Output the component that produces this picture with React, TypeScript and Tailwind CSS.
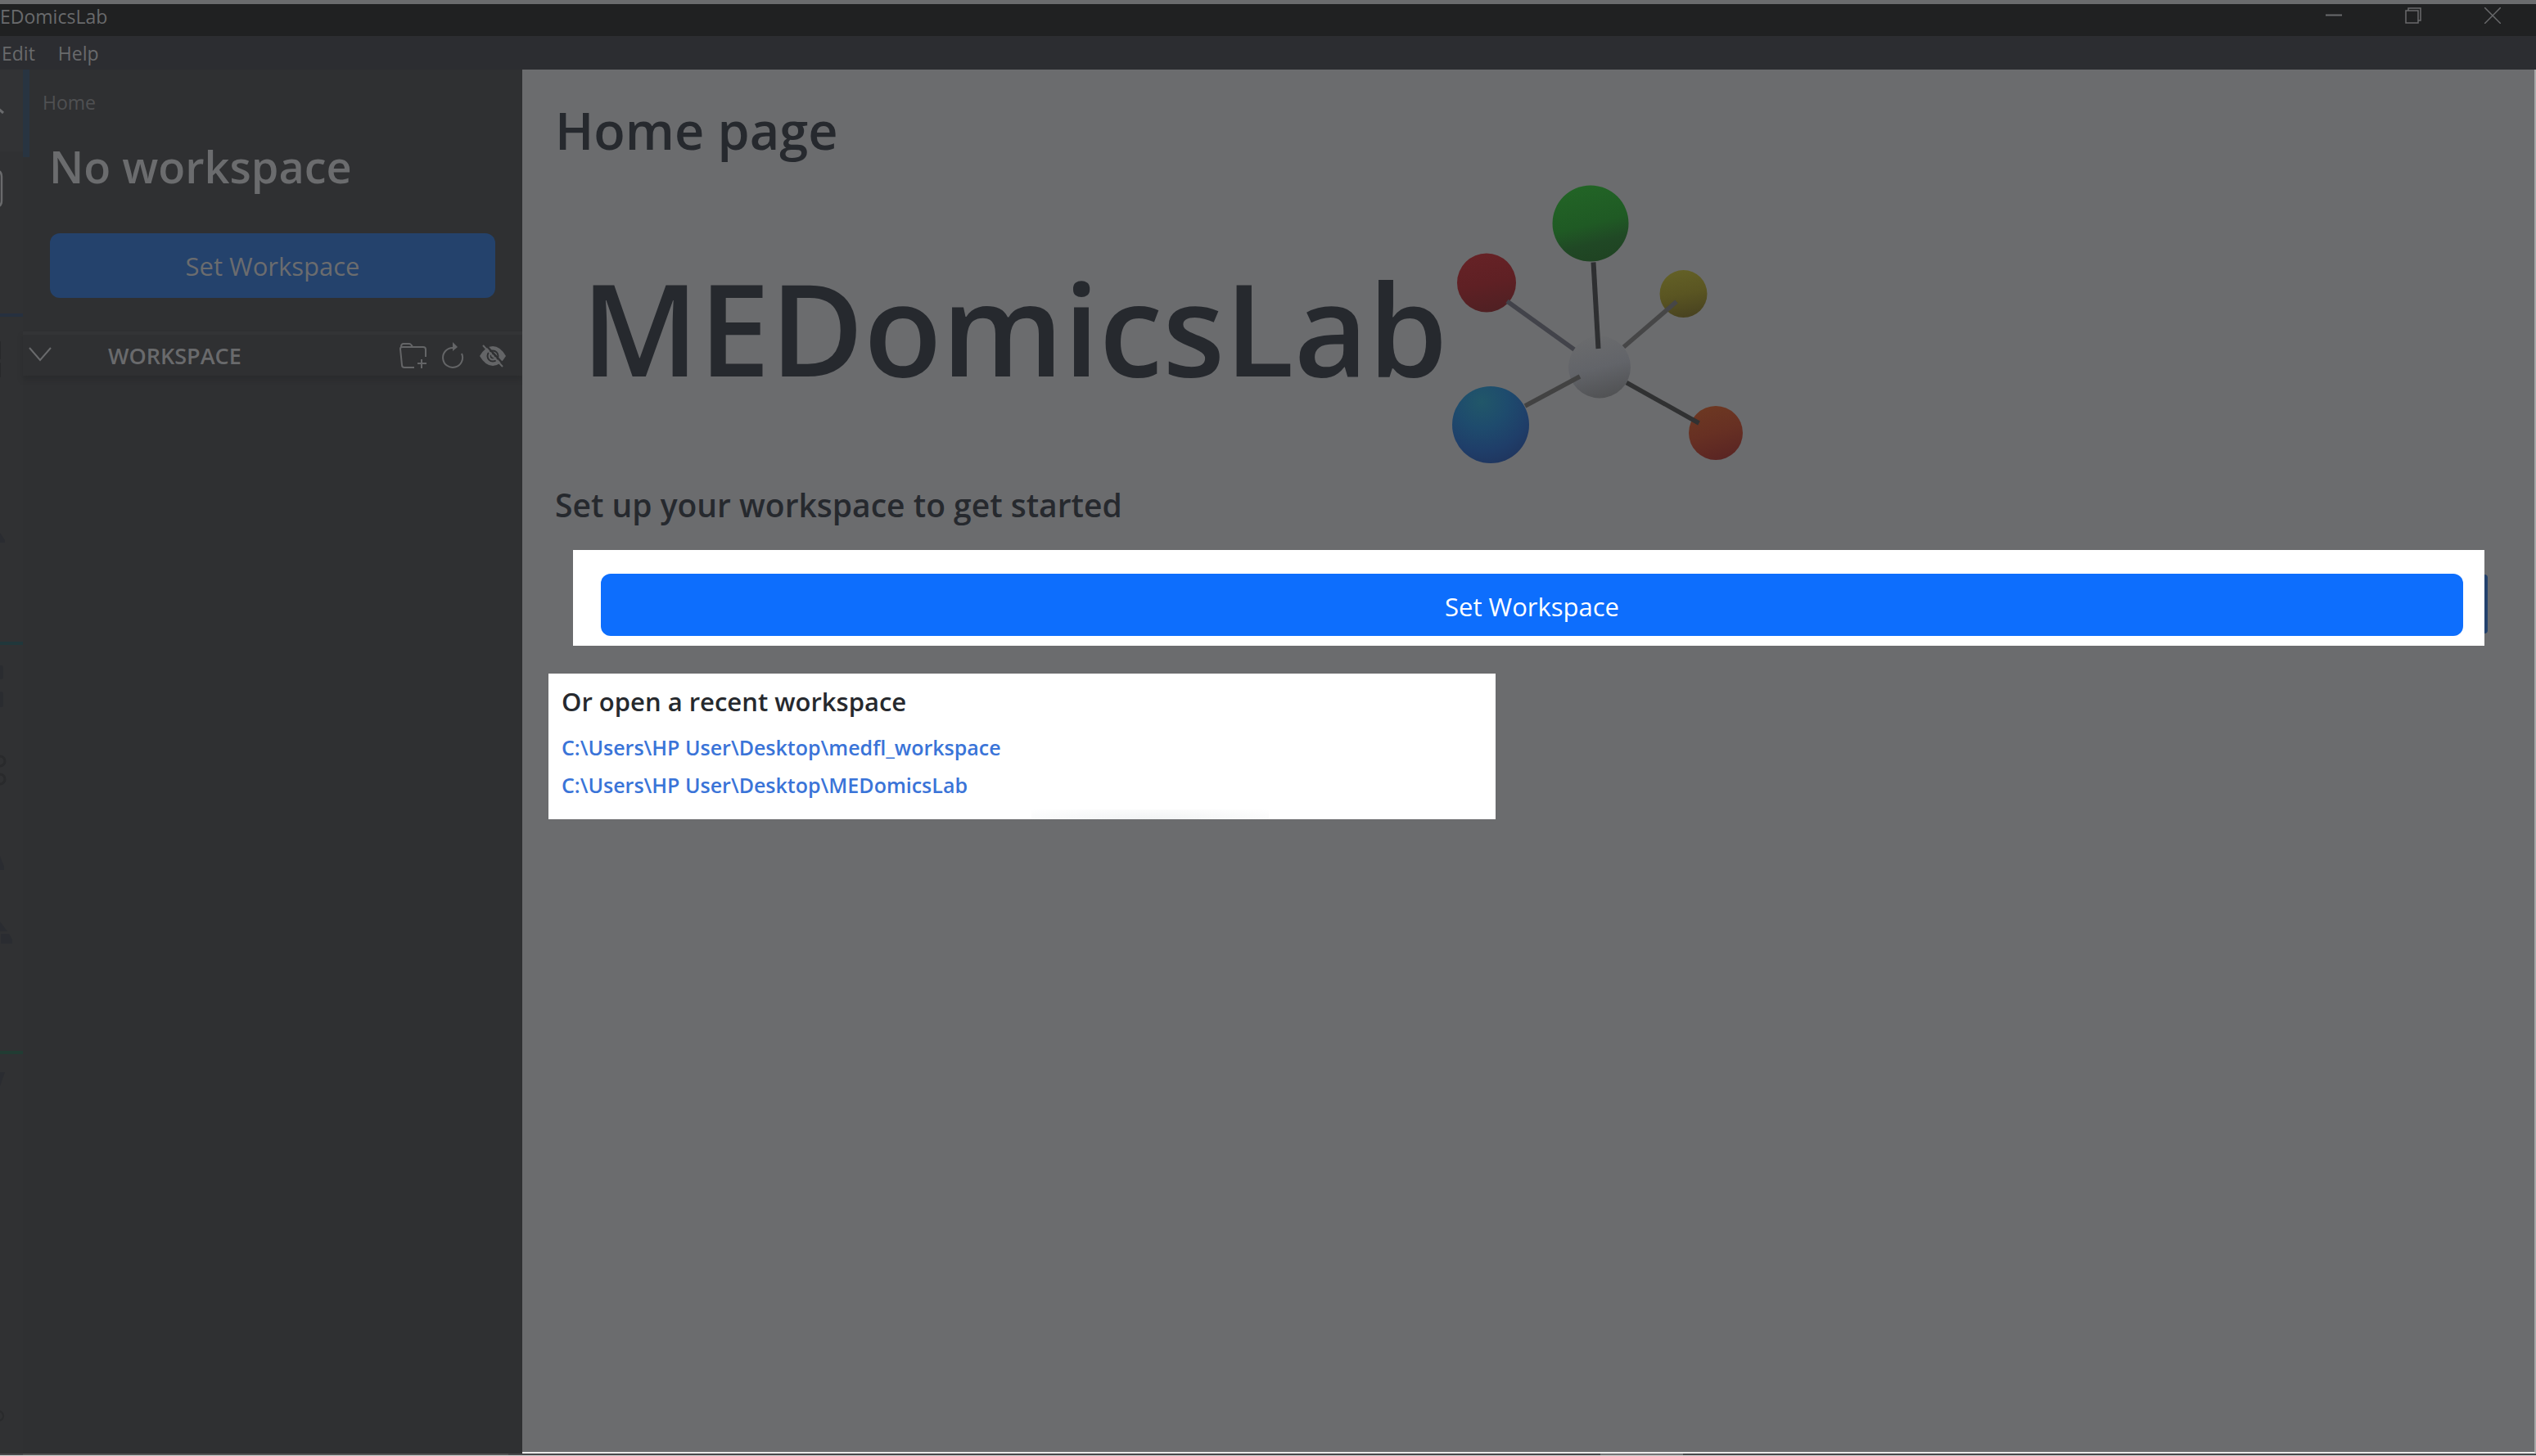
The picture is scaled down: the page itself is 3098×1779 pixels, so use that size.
import React from "react";

const recent = [
  "C:\\Users\\HP User\\Desktop\\medfl_workspace",
  "C:\\Users\\HP User\\Desktop\\MEDomicsLab",
];

function Molecule() {
  return (
    <svg viewBox="0 0 420 390" className="h-[390px] w-[420px] shrink-0" role="img" aria-label="Molecule logo">
      <defs>
        <linearGradient id="green" x1="0.4" y1="0" x2="0.65" y2="1">
          <stop offset="0" stopColor="#226426" />
          <stop offset="0.5" stopColor="#1f5a24" />
          <stop offset="0.75" stopColor="#204825" />
          <stop offset="1" stopColor="#1f4322" />
        </linearGradient>
        <linearGradient id="red" x1="0.4" y1="0" x2="0.6" y2="1">
          <stop offset="0" stopColor="#662226" />
          <stop offset="0.5" stopColor="#5f2024" />
          <stop offset="1" stopColor="#4f2023" />
        </linearGradient>
        <linearGradient id="yellow" x1="0.4" y1="0" x2="0.6" y2="1">
          <stop offset="0" stopColor="#636026" />
          <stop offset="0.5" stopColor="#5a5522" />
          <stop offset="1" stopColor="#484220" />
        </linearGradient>
        <radialGradient id="blue" cx="0.38" cy="0.2" r="0.85">
          <stop offset="0" stopColor="#215769" />
          <stop offset="0.4" stopColor="#1e4b6d" />
          <stop offset="0.75" stopColor="#1f3e69" />
          <stop offset="1" stopColor="#1f355e" />
        </radialGradient>
        <linearGradient id="orange" x1="0.3" y1="0" x2="0.6" y2="1">
          <stop offset="0" stopColor="#6d3822" />
          <stop offset="0.5" stopColor="#673023" />
          <stop offset="1" stopColor="#5a2523" />
        </linearGradient>
        <linearGradient id="core" x1="0.4" y1="0" x2="0.65" y2="1">
          <stop offset="0" stopColor="#6a6b6d" />
          <stop offset="0.5" stopColor="#626469" />
          <stop offset="1" stopColor="#505153" />
        </linearGradient>
      </defs>
      <circle cx="203" cy="72" r="46.500" fill="url(#green)" />
      <circle cx="76" cy="144.500" r="36" fill="url(#red)" />
      <circle cx="316.500" cy="158" r="29" fill="url(#yellow)" />
      <circle cx="81" cy="318" r="47" fill="url(#blue)" />
      <circle cx="356" cy="328" r="33" fill="url(#orange)" />
      <circle cx="214" cy="247.500" r="38" fill="url(#core)" />
      <g strokeWidth="5.500" fill="none">
        <path d="M206.500 119.500 212.500 225" stroke="#2e2f31" strokeWidth="6" />
        <path d="M101 167 183 226" stroke="#42434a" />
        <path d="M308 167.500 243.500 223" stroke="#464647" />
        <path d="M123 295 190 259" stroke="#424242" />
        <path d="M247 266.500 335.500 316" stroke="#303132" />
      </g>
    </svg>
  );
}

function FolderPlus() {
  return (
    <svg viewBox="0 0 34 36" className="h-9 w-[34px]" fill="none" stroke="#646567" strokeWidth="2">
      <path d="M19 32H7q-3 0-3-3L2 9q0-2 3-2h25q3 0 3 3v9" />
      <path d="M3 7Q3 3 6 3h7q2 0 4 4M28 22v11M23 27h11" />
    </svg>
  );
}

function Refresh() {
  return (
    <svg viewBox="0 0 28 36" className="h-9 w-7" fill="none" stroke="#646567" strokeWidth="2">
      <path d="M15 8A12 12 0 1 0 25 15" />
      <path d="M14 1v11l6-5z" fill="#646567" stroke="none" />
    </svg>
  );
}

function EyeSlash() {
  return (
    <svg viewBox="0 0 34 36" className="h-9 w-[34px]" fill="none">
      <path d="M1 18Q8 6 17 6T33 18Q26 30 17 30T1 18z" fill="#646567" />
      <circle cx="17" cy="18" r="6.500" stroke="#2f3032" strokeWidth="2" />
      <circle cx="17" cy="18" r="2.500" stroke="#2f3032" strokeWidth="1.500" />
      <path d="M7 3 31 29" stroke="#2f3032" strokeWidth="2.500" />
      <path d="M5 5 29 31" stroke="#646567" strokeWidth="2" />
    </svg>
  );
}

export default function App() {
  return (
    <div className="flex min-h-screen flex-col overflow-hidden bg-[#2f3032] font-['Open_Sans','Noto_Sans',sans-serif] text-[#696a6c]">
      <header className="border-t-[5px] border-[#6b6c6e]">
        <div className="flex h-[39px] items-start justify-between bg-[#202122]">
          <span className="text-[23px] leading-[30px]">EDomicsLab</span>
          <div className="flex gap-[77px] pr-[43px] pt-1">
            <button aria-label="Minimize">
              <svg viewBox="0 0 20 20" className="size-5" stroke="#696a6c" strokeWidth="2"><path d="M0 9.500h20" /></svg>
            </button>
            <button aria-label="Restore">
              <svg viewBox="0 0 20 20" className="size-5" fill="none" stroke="#696a6c" strokeWidth="1.500"><path d="M1 4h15v15H1zM4 4V1h15v15h-3" /></svg>
            </button>
            <button aria-label="Close">
              <svg viewBox="0 0 20 20" className="size-5" stroke="#696a6c" strokeWidth="1.500"><path d="M0 0 20 20M20 0 0 20" /></svg>
            </button>
          </div>
        </div>
        <nav className="flex h-[41px] items-center gap-7 bg-[#2c2d31] pl-[2px] text-[23px] leading-8">
          <button>Edit</button>
          <button>Help</button>
        </nav>
      </header>

      <div className="flex flex-1">
        <aside className="relative w-7 shrink-0 overflow-hidden bg-[#303133]">
          <svg viewBox="0 0 28 1689" className="absolute left-0 top-0 h-[1689px] w-7" fill="none">
            <path d="M0 0h28v100H0z" fill="#323335" />
            <path d="M-4 46 4 53" stroke="#696a6c" strokeWidth="3" />
            <path d="M-6 123Q2 123 2 131V160Q2 168-6 168" stroke="#696a6c" strokeWidth="2.500" />
            <path d="M0 298h28v4H0z" fill="#26303f" />
            <path d="M0 332v22M0 358v18" stroke="#28292b" strokeWidth="2" />
            <path d="M0 566 6 575V578H0z" fill="#2a2c31" />
            <path d="M0 699h28v4H0z" fill="#20373b" />
            <path d="M0 728h3l1 3v12l-1 2H0zM0 760h3l1 3v14l-1 2H0z" fill="#2a2c30" />
            <circle cx="0" cy="845" r="6" stroke="#292a2c" strokeWidth="3" />
            <circle cx="0" cy="867" r="6" stroke="#292a2c" strokeWidth="3" />
            <path d="M0 961 5 974V978H0zM0 1041 9 1053H0zM1 1056h10l4 7v5H1z" fill="#2a2c31" />
            <path d="M0 1199h28v4H0z" fill="#213c33" />
            <path d="M0 1225h6L0 1242z" fill="#2a2c31" />
            <circle cx="-2" cy="1645" r="6" stroke="#292a2c" strokeWidth="2" />
          </svg>
        </aside>

        <aside className="relative w-[610px] shrink-0">
          <div className="absolute left-0 top-0 h-[107px] w-2 bg-[#283441]" />
          <p className="pl-6 pt-6 text-[23px] leading-8 text-[#4f5052]">Home</p>
          <h2 className="pl-8 pt-[26px] text-[54px] font-semibold leading-[72px] text-[#6b6c6e]">No workspace</h2>
          <div className="pl-[33px] pr-[33px] pt-[46px]">
            <button className="h-[79px] w-full rounded-xl bg-[#24426c] pt-[2px] text-[31px] text-[#6b6c6e]">Set Workspace</button>
          </div>
          <div className="mt-[41px] flex h-[54px] items-center border-t-4 border-[#333436] pl-[7px] pr-[19px] pt-[2px] shadow-[0_5px_5px_#2b2c2e]">
            <button aria-label="Collapse workspace" className="pb-1">
              <svg viewBox="0 0 28 18" className="h-[18px] w-7" fill="none" stroke="#696a6c" strokeWidth="2"><path d="M1 1 14 16 27 1" /></svg>
            </button>
            <h3 className="ml-[69px] text-[27px] font-semibold leading-9">WORKSPACE</h3>
            <div className="ml-auto flex gap-[18px]">
              <button aria-label="New folder"><FolderPlus /></button>
              <button aria-label="Refresh"><Refresh /></button>
              <button aria-label="Hide"><EyeSlash /></button>
            </div>
          </div>
        </aside>

        <main className="relative min-w-0 flex-1 border-b-2 border-r-2 border-b-[#e8e8e8] border-r-[#a8a8a8] bg-[#6b6c6e] text-[#26292e]">
          <h1 className="pl-10 pt-8 text-[63px] font-semibold leading-[84px]">Home page</h1>
          <div className="flex h-[386px] items-start pl-[72px]">
            <span className="w-[1030px] pt-[121px] text-[156px] font-semibold leading-none">MEDomicsLab</span>
            <Molecule />
          </div>
          <h2 className="pl-10 text-[39px] font-semibold leading-[60px]">Set up your workspace to get started</h2>
          <div className="relative ml-[62px] mr-[61px] mt-[25px] bg-white pb-3 pl-[34px] pr-[26px] pt-[29px]">
            <div className="absolute left-full top-[30px] h-[72px] w-1 rounded-r bg-[#24426c]" />
            <button className="block h-[76px] w-full rounded-xl bg-[#0d6efd] pt-[4px] text-[31px] text-white">Set Workspace</button>
          </div>
          <section className="relative ml-8 mt-[34px] h-[178px] w-[1157px] bg-white px-4 pt-[11px]">
            <h3 className="text-[31px] font-semibold leading-[46px]">Or open a recent workspace</h3>
            <ul className="pt-[10px] text-[25px] font-semibold text-[#3a74d8]">
              {recent.map((path) => (
                <li key={path} className="leading-[46px]"><a href="#">{path}</a></li>
              ))}
            </ul>
            <div className="absolute bottom-0 left-[590px] h-3 w-[290px] bg-radial-[at_50%_100%] from-[#f1f3f4] to-white" />
          </section>
        </main>
      </div>
      <footer className="flex h-[3px] border-b border-[#cfcfcf] bg-[#48484a]">
        <div className="ml-7 w-[593px] bg-[#555555]" />
        <div className="ml-[1334px] w-[101px] bg-[#747476]" />
      </footer>
    </div>
  );
}
